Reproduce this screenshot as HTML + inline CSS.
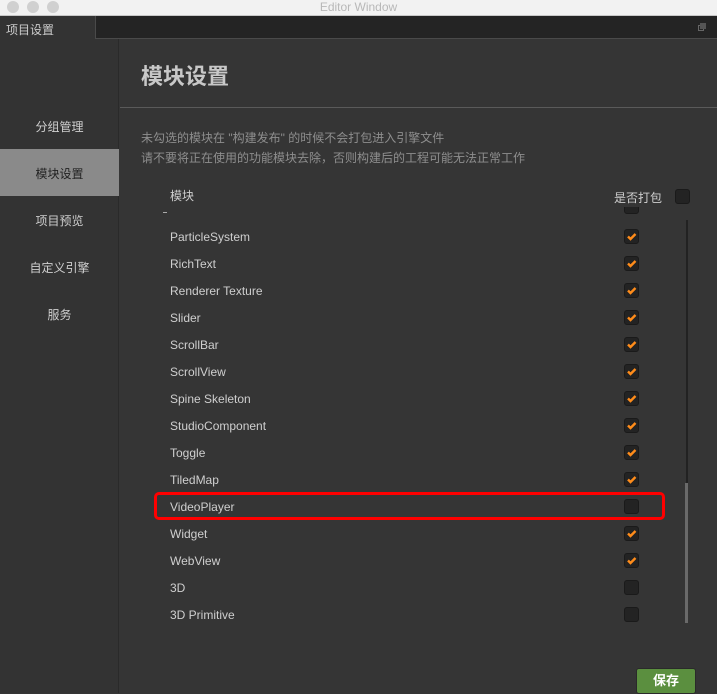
<!DOCTYPE html><html><head><meta charset="utf-8"><style>
*{margin:0;padding:0;box-sizing:border-box}
body{width:717px;height:693px;overflow:hidden;background:#353535;font-family:"Liberation Sans","Noto Sans CJK SC",sans-serif;position:relative}
.a{position:absolute}
.cb{position:absolute;left:624px;width:15px;height:15px;background:#232323;border:1px solid #1a1a1a;border-radius:3px}
.cb svg{position:absolute;left:1px;top:1px}
.row{position:absolute;left:170px;font-size:12px;color:#cfcfcf;line-height:14px}
.nav{position:absolute;left:0;width:119px;text-align:center;font-size:12px;color:#cfcfcf}
</style></head><body>
<div class="a" style="left:0;top:0;width:717px;height:16px;background:#f2f2f2;border-bottom:1px solid #c8c8c8"></div>
<div class="a" style="left:7px;top:1px;width:12px;height:12px;border-radius:50%;background:#d0d0d0"></div>
<div class="a" style="left:27px;top:1px;width:12px;height:12px;border-radius:50%;background:#d0d0d0"></div>
<div class="a" style="left:47px;top:1px;width:12px;height:12px;border-radius:50%;background:#d0d0d0"></div>
<div class="a" style="left:0;top:0;width:717px;text-align:center;font-size:12px;color:#b8b8b8;line-height:14px">Editor Window</div>
<div class="a" style="left:0;top:16px;width:717px;height:23px;background:#242424;border-bottom:1px solid #4a4a4a"></div>
<div class="a" style="left:0;top:16px;width:96px;height:23px;background:#333;border-right:1px solid #4a4a4a;font-size:12px;color:#ccc;padding:5px 0 0 6px">项目设置</div>
<div class="a" style="left:698px;top:25px;width:6px;height:6px;border:1px solid #666"></div>
<div class="a" style="left:700px;top:23px;width:6px;height:6px;background:#555"></div>
<div class="a" style="left:0;top:39px;width:119px;height:654px;background:#333;border-right:1px solid #2a2a2a"></div>
<div class="nav" style="top:118px">分组管理</div>
<div class="a" style="left:0;top:149px;width:119px;height:47px;background:#8a8a8a"></div>
<div class="nav" style="top:165px;color:#222">模块设置</div>
<div class="nav" style="top:212px">项目预览</div>
<div class="nav" style="top:259px">自定义引擎</div>
<div class="nav" style="top:306px">服务</div>
<div class="a" style="left:141px;top:59px;font-size:22px;font-weight:bold;color:#c8c8c8">模块设置</div>
<div class="a" style="left:120px;top:107px;width:597px;height:1px;background:#5a5a5a"></div>
<div class="a" style="left:141px;top:128px;font-size:12px;color:#8e8e8e;line-height:20px">未勾选的模块在 "构建发布" 的时候不会打包进入引擎文件<br>请不要将正在使用的功能模块去除，否则构建后的工程可能无法正常工作</div>
<div class="row" style="top:189px">模块</div>
<div class="a" style="left:614px;top:189px;font-size:12px;color:#cfcfcf">是否打包</div>
<div class="cb" style="left:675px;top:189px;width:15px;height:15px"></div>
<div class="a" style="left:686px;top:220px;width:2px;height:403px;background:#222"></div>
<div class="a" style="left:685px;top:483px;width:3px;height:140px;background:#6a6a6a"></div>
<div class="a" style="left:120px;top:207px;width:560px;height:9px;overflow:hidden"><div class="cb" style="left:504px;top:-8px"></div><div style="position:absolute;left:43px;top:5px;width:4px;height:1px;background:#aaa"></div></div>
<div id="L"></div>
<div class="a" style="left:154px;top:492px;width:511px;height:28px;border:3px solid #ff0000;border-radius:5px"></div>
<div class="a" style="left:636px;top:668px;width:60px;height:26px;background:#5b8f3f;border:1px solid #2a2a2a;border-radius:3px;color:#fff;font-size:13px;font-weight:bold;text-align:center;line-height:24px">保存</div>
<script>
var r=[["ParticleSystem",1],["RichText",1],["Renderer Texture",1],["Slider",1],["ScrollBar",1],["ScrollView",1],["Spine Skeleton",1],["StudioComponent",1],["Toggle",1],["TiledMap",1],["VideoPlayer",0],["Widget",1],["WebView",1],["3D",0],["3D Primitive",0]];
var h="";r.forEach(function(x,i){var y=236+27*i;h+='<div class="row" style="top:'+(y-6)+'px">'+x[0]+'</div><div class="cb" style="top:'+(y-7)+'px">'+(x[1]?'<svg width="11" height="11" viewBox="0 0 11 11"><path d="M2 5.5L4.5 8L9.5 3" stroke="#ff8c1a" stroke-width="2.4" fill="none"/></svg>':'')+'</div>';});
document.getElementById("L").outerHTML=h;
</script>
</body></html>
